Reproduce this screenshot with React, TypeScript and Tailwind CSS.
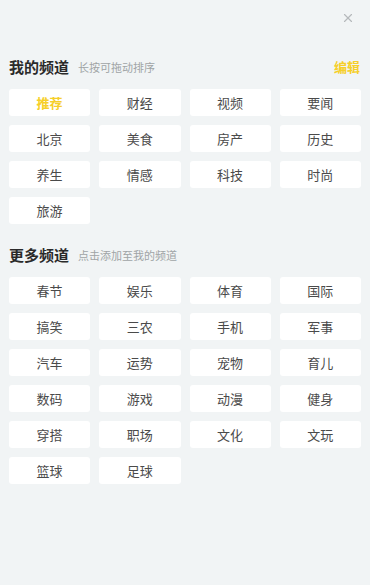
import { X } from "lucide-react";

const myChannels = [
  "推荐", "财经", "视频", "要闻",
  "北京", "美食", "房产", "历史",
  "养生", "情感", "科技", "时尚",
  "旅游",
];

const moreChannels = [
  "春节", "娱乐", "体育", "国际",
  "搞笑", "三农", "手机", "军事",
  "汽车", "运势", "宠物", "育儿",
  "数码", "游戏", "动漫", "健身",
  "穿搭", "职场", "文化", "文玩",
  "篮球", "足球",
];

function ChannelGrid({ items, active }: { items: string[]; active?: string }) {
  return (
    <div className="grid grid-cols-4 gap-x-[9px] gap-y-[9px] px-[9px]">
      {items.map((name) => (
        <div
          key={name}
          className={
            "h-[27px] rounded-[3px] bg-white flex items-center justify-center text-[13px] " +
            (name === active ? "text-[#f6cf2a] font-bold" : "text-[#4a4a4a]")
          }
        >
          {name}
        </div>
      ))}
    </div>
  );
}

function SectionHeader({
  title,
  hint,
  action,
}: {
  title: string;
  hint: string;
  action?: string;
}) {
  return (
    <div className="flex items-center h-[22px] px-[9px] mb-[11px]">
      <span className="text-[15px] font-bold text-[#2a2a2a]">{title}</span>
      <span className="ml-[9px] text-[11px] text-[#a0a4a6] mt-[1px]">{hint}</span>
      {action && (
        <span className="ml-auto mr-[1px] text-[13px] font-bold text-[#f6cf2a]">
          {action}
        </span>
      )}
    </div>
  );
}

export default function App() {
  return (
    <div
      className="w-[370px] h-[585px] bg-[#f1f4f5] overflow-hidden"
      style={{ fontFamily: '"Noto Sans CJK SC", "Noto Sans", sans-serif' }}
    >
      <div className="flex justify-end pt-[11px] pr-[15px] h-[56px]">
        <X className="w-[14px] h-[14px] text-[#b5b9bb]" strokeWidth={2} />
      </div>
      <SectionHeader title="我的频道" hint="长按可拖动排序" action="编辑" />
      <ChannelGrid items={myChannels} active="推荐" />
      <div className="h-[20px]" />
      <SectionHeader title="更多频道" hint="点击添加至我的频道" />
      <ChannelGrid items={moreChannels} />
    </div>
  );
}
